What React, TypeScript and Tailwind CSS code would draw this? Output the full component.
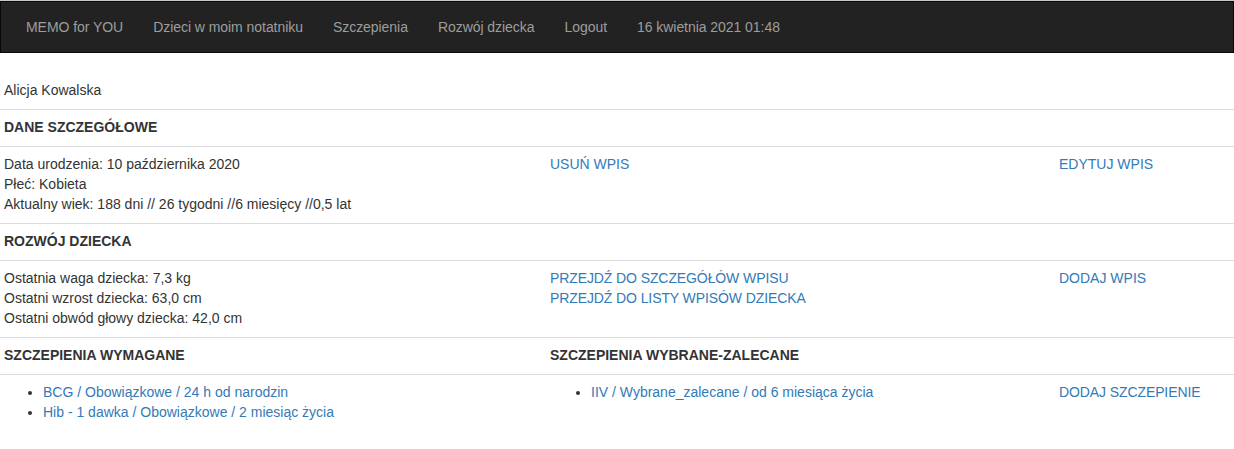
import React from 'react';

const navLinks = ['MEMO for YOU', 'Dzieci w moim notatniku', 'Szczepienia', 'Rozwój dziecka', 'Logout', '16 kwietnia 2021 01:48'];

const cell = 'pl-[4px] pr-2 pt-[7px] pb-[9px]';
const row = 'grid grid-cols-[546px_509px_1fr] border-t border-[#ddd]';
const link = 'text-[#337ab7]';

export default function App() {
  return (
    <div className="min-h-[449px] bg-white text-[14px] leading-[20px] text-[#333]" style={{ fontFamily: '"Liberation Sans", Arial, sans-serif' }}>
      {/* Navbar */}
      <div className="border-t border-[#c8c8c8]">
        <nav className="flex h-[52px] items-center border border-[#080808] bg-[#222] pb-[1px] pl-[10px]">
          {navLinks.map((l) => (
            <span key={l} className="px-[15px] text-[#9d9d9d] tracking-[-0.05px]">
              {l}
            </span>
          ))}
        </nav>
      </div>

      <div className="mt-[20px]">
        <div className={cell}>Alicja Kowalska</div>

        <div className={row}>
          <div className={`${cell} font-bold`}>DANE SZCZEGÓŁOWE</div>
          <div />
          <div />
        </div>
        <div className={row}>
          <div className={cell}>
            <div>Data urodzenia: 10 października 2020</div>
            <div>Płeć: Kobieta</div>
            <div>Aktualny wiek: 188 dni // 26 tygodni //6 miesięcy //0,5 lat</div>
          </div>
          <div className={cell}>
            <span className={link}>USUŃ WPIS</span>
          </div>
          <div className={cell}>
            <span className={link}>EDYTUJ WPIS</span>
          </div>
        </div>

        <div className={row}>
          <div className={`${cell} font-bold`}>ROZWÓJ DZIECKA</div>
          <div />
          <div />
        </div>
        <div className={row}>
          <div className={cell}>
            <div>Ostatnia waga dziecka: 7,3 kg</div>
            <div>Ostatni wzrost dziecka: 63,0 cm</div>
            <div>Ostatni obwód głowy dziecka: 42,0 cm</div>
          </div>
          <div className={cell}>
            <div className={`${link} tracking-[-0.1px]`}>PRZEJDŹ DO SZCZEGÓŁÓW WPISU</div>
            <div className={`${link} tracking-[-0.1px]`}>PRZEJDŹ DO LISTY WPISÓW DZIECKA</div>
          </div>
          <div className={cell}>
            <span className={link}>DODAJ WPIS</span>
          </div>
        </div>

        <div className={row}>
          <div className={`${cell} font-bold`}>SZCZEPIENIA WYMAGANE</div>
          <div className={`${cell} font-bold`}>SZCZEPIENIA WYBRANE-ZALECANE</div>
          <div />
        </div>
        <div className={row}>
          <div className={cell}>
            <ul className="list-disc pl-[39px]">
              <li>
                <span className={link}>BCG / Obowiązkowe / 24 h od narodzin</span>
              </li>
              <li>
                <span className={link}>Hib - 1 dawka / Obowiązkowe / 2 miesiąc życia</span>
              </li>
            </ul>
          </div>
          <div className={cell}>
            <ul className="list-disc pl-[41px]">
              <li>
                <span className={link}>IIV / Wybrane_zalecane / od 6 miesiąca życia</span>
              </li>
            </ul>
          </div>
          <div className={cell}>
            <span className={`${link} tracking-[-0.1px]`}>DODAJ SZCZEPIENIE</span>
          </div>
        </div>
      </div>
    </div>
  );
}
